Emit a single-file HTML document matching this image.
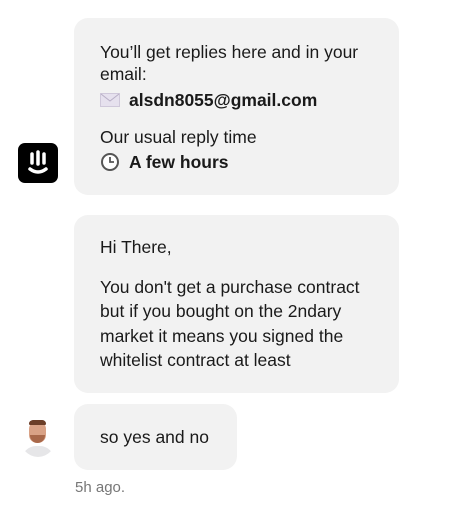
<!DOCTYPE html>
<html><head><style>
body{margin:0;width:461px;height:517px;background:#fff;font-family:"Liberation Sans","Noto Sans CJK KR",sans-serif;color:#1a1a1a;font-size:17.5px;position:relative;overflow:hidden}
.b{position:absolute;left:74px;background:#f2f2f2;border-radius:14px;box-sizing:border-box;padding:0 26px}
p{margin:0}
.row{display:flex;align-items:center;gap:9px;font-weight:bold;height:26px}
</style></head><body>
<div class="b" style="top:18px;width:325px;height:177px;padding-top:23px;line-height:22px">
<p>You’ll get replies here and in your email:</p>
<div class="row" style="margin-top:2px"><svg width="20" height="14" viewBox="0 0 20 14"><rect x="0.5" y="0.5" width="19" height="13" fill="#e6e1ee" stroke="#cfc8da"/><path d="M1 1l9 7 9-7" fill="none" stroke="#b8afc6"/></svg><span>alsdn8055@gmail.com</span></div>
<p style="margin-top:13px">Our usual reply time</p>
<div class="row" style="margin-top:1px"><svg width="20" height="20" viewBox="0 0 20 20"><circle cx="10" cy="10" r="8" fill="#fff" stroke="#555" stroke-width="2"/><path d="M10 5v5h4" fill="none" stroke="#555" stroke-width="1.8"/></svg><span>A few hours</span></div>
</div>
<div style="position:absolute;left:18px;top:143px;width:40px;height:40px;background:#000;border-radius:7px">
<svg width="40" height="40" viewBox="0 0 40 40"><g stroke="#fff" stroke-width="3.5" stroke-linecap="round" fill="none"><path d="M14 11v9M20 9v12M26 11v9"/><path d="M12 26q8 6 16 0"/></g></svg></div>
<div class="b" style="top:215px;width:325px;height:178px;padding-top:20px;line-height:24.5px">
<p>Hi There,</p>
<p style="margin-top:15px">You don't get a purchase contract but if you bought on the 2ndary market it means you signed the whitelist contract at least</p>
</div>
<div style="position:absolute;left:20px;top:419px;width:36px;height:38px;border-radius:50%;overflow:hidden;background:#fff">
<div style="position:absolute;left:9px;top:2px;width:17px;height:22px;border-radius:8px;background:#d9a286"></div>
<div style="position:absolute;left:9px;top:1px;width:17px;height:5px;border-radius:6px 6px 2px 2px;background:#6b3e28"></div>
<div style="position:absolute;left:10px;top:16px;width:15px;height:8px;border-radius:0 0 8px 8px;background:#a8684a"></div>
<div style="position:absolute;left:2px;top:27px;width:32px;height:20px;border-radius:14px 14px 0 0;background:#e6e6e8"></div>
</div>
<div class="b" style="top:404px;width:163px;height:66px;line-height:66px">so yes and no</div>
<div style="position:absolute;left:75px;top:479px;color:#777;font-size:15px">5h ago.</div>
</body></html>
